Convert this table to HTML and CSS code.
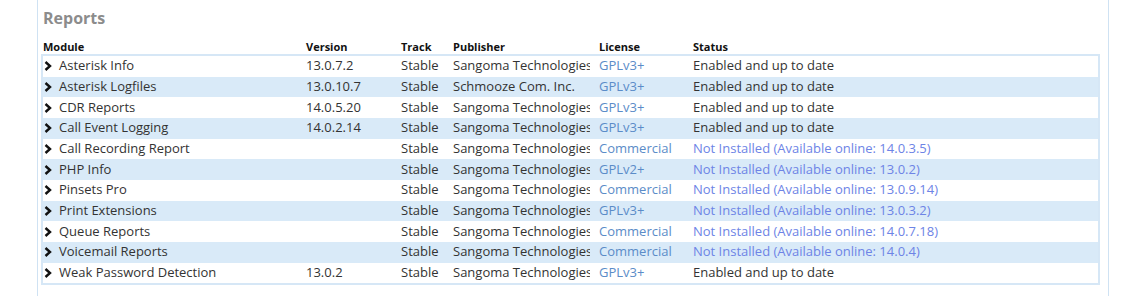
FILE: index.html
```html
<!DOCTYPE html>
<html>
<head>
<meta charset="utf-8">
<link rel="stylesheet" href="styles.css">
</head>
<body>
<div class="panel">
  <h2 class="title">Reports</h2>
  <table class="modules">
    <colgroup>
      <col class="c-module"><col class="c-version"><col class="c-track"><col class="c-pub"><col class="c-lic"><col class="c-status">
    </colgroup>
    <thead>
      <tr><th>Module</th><th>Version</th><th>Track</th><th>Publisher</th><th>License</th><th>Status</th></tr>
    </thead>
    <tbody>
      <tr><td><span class="chev"><svg viewBox="0 0 8 10" width="8" height="10"><path d="M1.5 1 L6 5 L1.5 9" fill="none" stroke="#111" stroke-width="2.4"/></svg></span>Asterisk Info</td><td>13.0.7.2</td><td>Stable</td><td><span class="pub">Sangoma Technologies Corporation</span></td><td class="lic">GPLv3+</td><td>Enabled and up to date</td></tr>
      <tr><td><span class="chev"><svg viewBox="0 0 8 10" width="8" height="10"><path d="M1.5 1 L6 5 L1.5 9" fill="none" stroke="#111" stroke-width="2.4"/></svg></span>Asterisk Logfiles</td><td>13.0.10.7</td><td>Stable</td><td><span class="pub">Schmooze Com. Inc.</span></td><td class="lic">GPLv3+</td><td>Enabled and up to date</td></tr>
      <tr><td><span class="chev"><svg viewBox="0 0 8 10" width="8" height="10"><path d="M1.5 1 L6 5 L1.5 9" fill="none" stroke="#111" stroke-width="2.4"/></svg></span>CDR Reports</td><td>14.0.5.20</td><td>Stable</td><td><span class="pub">Sangoma Technologies Corporation</span></td><td class="lic">GPLv3+</td><td>Enabled and up to date</td></tr>
      <tr><td><span class="chev"><svg viewBox="0 0 8 10" width="8" height="10"><path d="M1.5 1 L6 5 L1.5 9" fill="none" stroke="#111" stroke-width="2.4"/></svg></span>Call Event Logging</td><td>14.0.2.14</td><td>Stable</td><td><span class="pub">Sangoma Technologies Corporation</span></td><td class="lic">GPLv3+</td><td>Enabled and up to date</td></tr>
      <tr><td><span class="chev"><svg viewBox="0 0 8 10" width="8" height="10"><path d="M1.5 1 L6 5 L1.5 9" fill="none" stroke="#111" stroke-width="2.4"/></svg></span>Call Recording Report</td><td></td><td>Stable</td><td><span class="pub">Sangoma Technologies Corporation</span></td><td class="lic">Commercial</td><td class="na">Not Installed (Available online: 14.0.3.5)</td></tr>
      <tr><td><span class="chev"><svg viewBox="0 0 8 10" width="8" height="10"><path d="M1.5 1 L6 5 L1.5 9" fill="none" stroke="#111" stroke-width="2.4"/></svg></span>PHP Info</td><td></td><td>Stable</td><td><span class="pub">Sangoma Technologies Corporation</span></td><td class="lic">GPLv2+</td><td class="na">Not Installed (Available online: 13.0.2)</td></tr>
      <tr><td><span class="chev"><svg viewBox="0 0 8 10" width="8" height="10"><path d="M1.5 1 L6 5 L1.5 9" fill="none" stroke="#111" stroke-width="2.4"/></svg></span>Pinsets Pro</td><td></td><td>Stable</td><td><span class="pub">Sangoma Technologies Corporation</span></td><td class="lic">Commercial</td><td class="na">Not Installed (Available online: 13.0.9.14)</td></tr>
      <tr><td><span class="chev"><svg viewBox="0 0 8 10" width="8" height="10"><path d="M1.5 1 L6 5 L1.5 9" fill="none" stroke="#111" stroke-width="2.4"/></svg></span>Print Extensions</td><td></td><td>Stable</td><td><span class="pub">Sangoma Technologies Corporation</span></td><td class="lic">GPLv3+</td><td class="na">Not Installed (Available online: 13.0.3.2)</td></tr>
      <tr><td><span class="chev"><svg viewBox="0 0 8 10" width="8" height="10"><path d="M1.5 1 L6 5 L1.5 9" fill="none" stroke="#111" stroke-width="2.4"/></svg></span>Queue Reports</td><td></td><td>Stable</td><td><span class="pub">Sangoma Technologies Corporation</span></td><td class="lic">Commercial</td><td class="na">Not Installed (Available online: 14.0.7.18)</td></tr>
      <tr><td><span class="chev"><svg viewBox="0 0 8 10" width="8" height="10"><path d="M1.5 1 L6 5 L1.5 9" fill="none" stroke="#111" stroke-width="2.4"/></svg></span>Voicemail Reports</td><td></td><td>Stable</td><td><span class="pub">Sangoma Technologies Corporation</span></td><td class="lic">Commercial</td><td class="na">Not Installed (Available online: 14.0.4)</td></tr>
      <tr><td><span class="chev"><svg viewBox="0 0 8 10" width="8" height="10"><path d="M1.5 1 L6 5 L1.5 9" fill="none" stroke="#111" stroke-width="2.4"/></svg></span>Weak Password Detection</td><td>13.0.2</td><td>Stable</td><td><span class="pub">Sangoma Technologies Corporation</span></td><td class="lic">GPLv3+</td><td>Enabled and up to date</td></tr>
    </tbody>
  </table>
</div>
</body>
</html>
```
FILE: styles.css
```css
html, body {
  margin: 0;
  padding: 0;
  background: #fff;
  font-family: "Open Sans", "Liberation Sans", sans-serif;
  color: #333;
}
.panel {
  margin-left: 37px;
  width: 1067px;
  height: 296px;
  border-left: 1px solid #cfe2f3;
  border-right: 1px solid #cfe2f3;
  padding: 0 0 0 3px;
  box-sizing: content-box;
}
.title {
  margin: 0;
  padding: 6px 0 0 2px;
  height: 30px;
  font-size: 16px;
  font-weight: 700;
  color: #8c8c8c;
  line-height: 24px;
}
.modules {
  width: 1059px;
  table-layout: fixed;
  border-collapse: collapse;
  font-size: 13px;
}
.c-module { width: 263px; }
.c-version { width: 95px; }
.c-track { width: 52px; }
.c-pub { width: 146px; }
.c-lic { width: 94px; }
.modules th {
  text-align: left;
  font-size: 11px;
  font-weight: 700;
  color: #111;
  padding: 4px 1px 0;
  line-height: 14px;
}
.modules tbody {
  border: 2px solid #d6e7f6;
}
.modules td {
  padding: 0 1px 1px;
  height: 19.67px;
  line-height: 19px;
  white-space: nowrap;
  color: #333;
}
.modules tbody tr:nth-child(even) td {
  background: #d9eaf8;
}
.pub {
  display: block;
  width: 137px;
  overflow: hidden;
  white-space: nowrap;
}
.chev {
  display: inline-block;
  width: 15px;
  vertical-align: -1px;
}
.chev svg { display: block; }
.lic { color: #5b8cc8 !important; }
.na { color: #6d84e6 !important; }
```
